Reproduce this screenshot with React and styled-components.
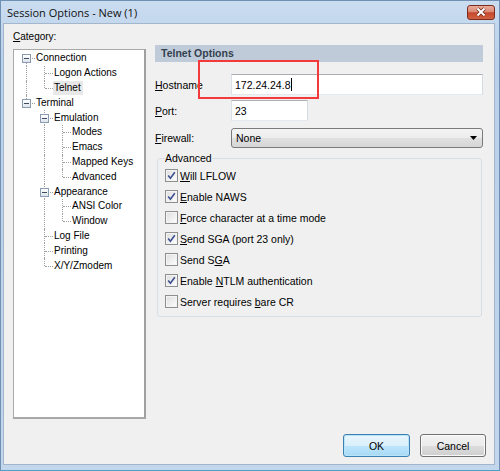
import { createGlobalStyle, styled } from "styled-components";

const GlobalStyle = createGlobalStyle`
  html, body {
    margin: 0;
    padding: 0;
  }
  body {
    width: 500px;
    height: 471px;
    overflow: hidden;
    background: #fff;
    font-family: "Liberation Sans", Arial, sans-serif;
    font-size: 10px;
    color: #000;
  }
`;

const Window = styled.div`
  position: relative;
  width: 500px;
  height: 471px;
  box-sizing: border-box;
  display: flex;
  flex-direction: column;
  background: linear-gradient(#cadcf0, #b9d1ea 60px, #c2d6ec);
  border: 1px solid #6f8fb3;
  border-bottom-color: #4aa3c4;
`;

const TitleBar = styled.div`
  height: 22px;
  flex: none;
  display: flex;
  align-items: center;
  justify-content: space-between;
  padding: 0 4px 0 6px;
`;

const Title = styled.span`
  font-family: "Open Sans", "Noto Sans", sans-serif;
  font-size: 11px;
  color: #111;
`;

const CloseButton = styled.div`
  width: 28px;
  height: 15px;
  box-sizing: border-box;
  border: 1px solid #7d2b1d;
  border-radius: 3px;
  background: linear-gradient(#e9ab9a, #da8a74 45%, #c6462d 52%, #d0623f);
  display: flex;
  align-items: center;
  justify-content: center;
`;

const Client = styled.div`
  flex: 1;
  margin: 0 4px 5px 2px;
  border: 1px solid #a3b6cb;
  background: #f0f0f0;
  display: flex;
  flex-direction: column;
`;

const Body = styled.div`
  display: flex;
  gap: 9px;
  padding: 6px 11px 0 9px;
`;

const LeftColumn = styled.div`
  width: 133px;
  display: flex;
  flex-direction: column;
`;

const Caption = styled.div`
  line-height: 14px;
  height: 14px;
`;

const Key = styled.span`
  text-decoration: underline;
  text-underline-offset: 1px;
`;

const TreeBox = styled.div`
  margin-top: 5px;
  height: 370px;
  box-sizing: border-box;
  background: #fff;
  border: 1px solid #a9a9a9;
  border-right: 2px solid #a0a0a0;
  border-bottom: 2px solid #a8a8a8;
  padding: 1px 0 0 3px;
`;

const TreeRow = styled.div`
  height: 14.8px;
  display: flex;
  align-items: stretch;
  white-space: nowrap;
`;

const Guide = styled.div`
  width: 18px;
  flex: none;
  position: relative;
  &::before {
    content: "";
    display: ${(p) => (p.$line ? "block" : "none")};
    position: absolute;
    left: 9px;
    top: 0;
    bottom: 0;
    border-left: 1px dotted #a0a0a0;
  }
`;

const Elbow = styled.div`
  width: 18px;
  flex: none;
  position: relative;
  &::before {
    content: "";
    position: absolute;
    left: 9px;
    top: ${(p) => (p.$top ? "0" : "50%")};
    bottom: ${(p) => (p.$bottom ? "0" : "50%")};
    border-left: 1px dotted #a0a0a0;
  }
  &::after {
    content: "";
    position: absolute;
    left: 10px;
    right: 0;
    top: 50%;
    border-top: 1px dotted #a0a0a0;
  }
`;

const Expander = styled.div`
  position: absolute;
  z-index: 1;
  left: 5px;
  top: 50%;
  margin-top: -4px;
  width: 9px;
  height: 9px;
  box-sizing: border-box;
  border: 1px solid #8c9cb0;
  background: linear-gradient(#ffffff, #dde4ec);
  &::after {
    content: "";
    position: absolute;
    left: 1px;
    right: 1px;
    top: 3px;
    height: 1px;
    background: #3d4b5e;
  }
`;

const NodeLabel = styled.span`
  align-self: center;
  line-height: 14px;
  padding: 0 2px 0 1px;
  background: ${(p) => (p.$selected ? "#e8e8e8" : "transparent")};
`;

const RightColumn = styled.div`
  width: 328px;
  padding-top: 15px;
  display: flex;
  flex-direction: column;
`;

const PanelHeader = styled.div`
  height: 17px;
  line-height: 17px;
  padding-left: 6px;
  background: #bfcbd9;
  color: #34414f;
  font-weight: bold;
  font-size: 10.5px;
`;

const FormRow = styled.div`
  display: flex;
  align-items: center;
  margin-top: ${(p) => p.$gap}px;
`;

const FieldLabel = styled.div`
  width: 76px;
  flex: none;
  font-size: 10.5px;
`;

const TextBox = styled.div`
  width: ${(p) => p.$width}px;
  height: 21px;
  box-sizing: border-box;
  border: 1px solid;
  border-color: #abadb3 #d5dbe3 #e3e9ef #dbdfe6;
  background: #fff;
  display: flex;
  align-items: center;
  padding-left: 3px;
  font-size: 10.5px;
`;

const Caret = styled.span`
  width: 1px;
  height: 13px;
  background: #000;
  margin-left: 1px;
`;

const Combo = styled.div`
  width: 252px;
  height: 20px;
  box-sizing: border-box;
  border: 1px solid #7a7a7a;
  border-radius: 3px;
  background: linear-gradient(#f4f4f4, #ececec 50%, #e0e0e0 50%, #d6d6d6);
  display: flex;
  align-items: center;
  justify-content: space-between;
  padding: 0 5px 0 4px;
  font-size: 10.5px;
`;

const Group = styled.fieldset`
  margin: 4px 0 0 2px;
  width: 325px;
  box-sizing: border-box;
  border: 1px solid #d5dfe5;
  border-radius: 3px;
  padding: 1px 7px 4px;
`;

const Legend = styled.legend`
  padding: 0;
  line-height: 12px;
  font-size: 10.5px;
`;

const CheckRow = styled.div`
  height: 21px;
  display: flex;
  align-items: center;
  font-size: 10.5px;
`;

const CheckText = styled.span`
  white-space: pre;
`;

const CheckBox = styled.span`
  width: 13px;
  height: 13px;
  flex: none;
  box-sizing: border-box;
  border: 1px solid #8e8f8f;
  background: linear-gradient(135deg, #dcdcdc, #ffffff);
  box-shadow: inset 0 0 0 1px #f4f4f4;
  margin-right: 2px;
  display: flex;
  align-items: center;
  justify-content: center;
`;

const Footer = styled.div`
  margin-top: auto;
  display: flex;
  justify-content: flex-end;
  gap: 10px;
  padding: 0 8px 7px 0;
`;

const Button = styled.div`
  width: ${(p) => p.$width}px;
  height: 23px;
  box-sizing: border-box;
  border: 1px solid ${(p) => (p.$default ? "#3c7fb1" : "#707070")};
  border-radius: 3px;
  background: ${(p) =>
    p.$default
      ? "linear-gradient(#eaf6fd, #d9f0fc 50%, #bee6fd 50%, #a7d9f5)"
      : "linear-gradient(#f2f2f2, #ebebeb 50%, #dddddd 50%, #cfcfcf)"};
  box-shadow: inset 0 0 0 1px ${(p) => (p.$default ? "#b9e3f8" : "#fbfbfb")};
  display: flex;
  align-items: center;
  justify-content: center;
  font-size: 10.5px;
`;

const Annotation = styled.div`
  position: absolute;
  left: 197px;
  top: 59px;
  width: 121px;
  height: 39px;
  box-sizing: border-box;
  border: 2px solid #f23a3a;
  pointer-events: none;
`;

const tree = [
  {
    label: "Connection",
    children: [{ label: "Logon Actions" }, { label: "Telnet", selected: true }],
  },
  {
    label: "Terminal",
    children: [
      {
        label: "Emulation",
        children: [
          { label: "Modes" },
          { label: "Emacs" },
          { label: "Mapped Keys" },
          { label: "Advanced" },
        ],
      },
      {
        label: "Appearance",
        children: [{ label: "ANSI Color" }, { label: "Window" }],
      },
      { label: "Log File" },
      { label: "Printing" },
      { label: "X/Y/Zmodem" },
    ],
  },
];

function flatten(nodes, guides = [], rows = []) {
  nodes.forEach((node, i) => {
    const last = i === nodes.length - 1;
    rows.push({
      ...node,
      guides,
      top: !(guides.length === 0 && i === 0),
      bottom: !last,
    });
    if (node.children) flatten(node.children, [...guides, !last], rows);
  });
  return rows;
}

const options = [
  { text: ["", "W", "ill LFLOW"], checked: true },
  { text: ["", "E", "nable NAWS"], checked: true },
  { text: ["", "F", "orce character at a time mode"], checked: false },
  { text: ["", "S", "end SGA (port 23 only)"], checked: true },
  { text: ["Send S", "G", "A"], checked: false },
  { text: ["Enable ", "N", "TLM authentication"], checked: true },
  { text: ["Server requires ", "b", "are CR"], checked: false },
];

function CheckMark() {
  return (
    <svg width="9" height="9" viewBox="0 0 9 9">
      <path
        d="M1.2 4.6 L3.4 7.2 L7.8 1.2"
        fill="none"
        stroke="#3c4f8e"
        strokeWidth="1.6"
      />
    </svg>
  );
}

function CloseGlyph() {
  return (
    <svg width="12" height="10" viewBox="0 0 12 10">
      <path d="M2.5 1.5 L9.5 8.5 M9.5 1.5 L2.5 8.5" stroke="#6b2518" strokeWidth="3.4" />
      <path d="M2.5 1.5 L9.5 8.5 M9.5 1.5 L2.5 8.5" stroke="#fff" strokeWidth="2" />
    </svg>
  );
}

function DropArrow() {
  return (
    <svg width="7" height="4" viewBox="0 0 7 4">
      <path d="M0 0 H7 L3.5 4 Z" fill="#000" />
    </svg>
  );
}

export default function App() {
  const rows = flatten(tree);

  return (
    <>
      <GlobalStyle />
      <Window>
        <TitleBar>
          <Title>Session Options - New (1)</Title>
          <CloseButton>
            <CloseGlyph />
          </CloseButton>
        </TitleBar>

        <Client>
          <Body>
            <LeftColumn>
              <Caption>
                <Key>C</Key>ategory:
              </Caption>
              <TreeBox>
                {rows.map((row) => (
                  <TreeRow key={row.label}>
                    {row.guides.map((line, i) => (
                      <Guide key={i} $line={line} />
                    ))}
                    <Elbow $top={row.top} $bottom={row.bottom}>
                      {row.children && <Expander />}
                    </Elbow>
                    <NodeLabel $selected={row.selected}>{row.label}</NodeLabel>
                  </TreeRow>
                ))}
              </TreeBox>
            </LeftColumn>

            <RightColumn>
              <PanelHeader>Telnet Options</PanelHeader>

              <FormRow $gap={12}>
                <FieldLabel>
                  <Key>H</Key>ostname
                </FieldLabel>
                <TextBox $width={252}>
                  172.24.24.8
                  <Caret />
                </TextBox>
              </FormRow>

              <FormRow $gap={5}>
                <FieldLabel>
                  <Key>P</Key>ort:
                </FieldLabel>
                <TextBox $width={77}>23</TextBox>
              </FormRow>

              <FormRow $gap={7}>
                <FieldLabel>
                  <Key>F</Key>irewall:
                </FieldLabel>
                <Combo>
                  None
                  <DropArrow />
                </Combo>
              </FormRow>

              <Group>
                <Legend>Advanced</Legend>
                {options.map((opt) => (
                  <CheckRow key={opt.text.join("")}>
                    <CheckBox>{opt.checked && <CheckMark />}</CheckBox>
                    <CheckText>
                      {opt.text[0]}
                      <Key>{opt.text[1]}</Key>
                      {opt.text[2]}
                    </CheckText>
                  </CheckRow>
                ))}
              </Group>
            </RightColumn>
          </Body>

          <Footer>
            <Button $width={67} $default>
              OK
            </Button>
            <Button $width={66}>Cancel</Button>
          </Footer>
        </Client>

        <Annotation />
      </Window>
    </>
  );
}
